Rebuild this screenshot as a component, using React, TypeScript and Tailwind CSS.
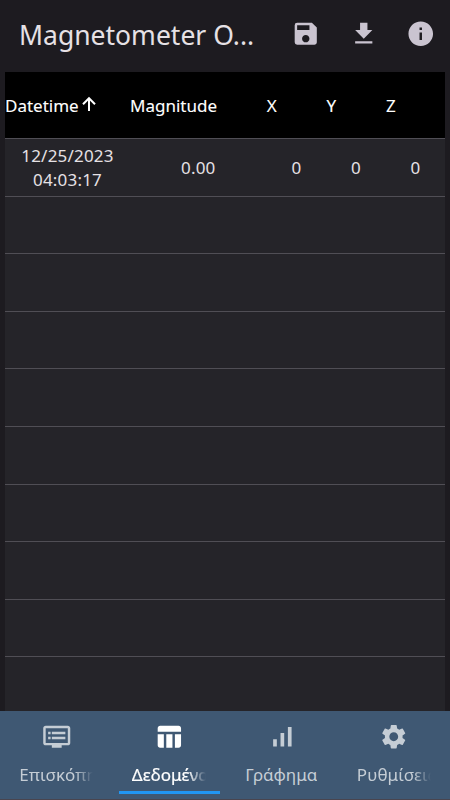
import clsx from "clsx";
import type { IconType } from "react-icons";
import {
  MdDvr,
  MdFileDownload,
  MdInfo,
  MdSave,
  MdSettings,
  MdSignalCellularAlt,
  MdTableChart,
} from "react-icons/md";

interface Reading {
  date: string;
  time: string;
  magnitude: string;
  x: number;
  y: number;
  z: number;
}

interface Tab {
  label: string;
  icon: IconType;
  active?: boolean;
  fade?: boolean;
}

const readings: Reading[] = [
  { date: "12/25/2023", time: "04:03:17", magnitude: "0.00", x: 0, y: 0, z: 0 },
];

const tabs: Tab[] = [
  { label: "Επισκόπηση", icon: MdDvr, fade: true },
  { label: "Δεδομένα", icon: MdTableChart, active: true, fade: true },
  { label: "Γράφημα", icon: MdSignalCellularAlt },
  { label: "Ρυθμίσεις", icon: MdSettings, fade: true },
];

const EMPTY_ROWS = 9;

function SortArrow() {
  return (
    <svg
      viewBox="0 0 20 20"
      className="mb-1 size-5 fill-none stroke-current stroke-2"
    >
      <path d="M10 17V4.5M4 10.2l6-6 6 6" />
    </svg>
  );
}

function TopBar() {
  return (
    <header className="flex h-[72px] shrink-0 items-center pl-[19px] pr-[14.5px] pb-[5px]">
      <h1 className="w-[240px] truncate pt-1 text-[26.5px] text-[#e6e1e5]">
        Magnetometer O...
      </h1>
      <div className="ml-auto flex gap-[28px] text-[#cac4d0]">
        <button aria-label="Save">
          <MdSave className="size-[29.5px]" />
        </button>
        <button aria-label="Download">
          <MdFileDownload className="size-[29.5px]" />
        </button>
        <button aria-label="Info">
          <MdInfo className="size-[29.5px]" />
        </button>
      </div>
    </header>
  );
}

function DataTable() {
  return (
    <main className="mx-[5px] min-h-0 flex-1 overflow-hidden bg-[#252429] text-[#e6e1e5]">
      <div className="flex h-[66px] items-center bg-black pt-0.5 text-[17px] text-white [-webkit-text-stroke:0.1px_white]">
        <div className="flex w-[125px] items-center">
          Datetime
          <SortArrow />
        </div>
        <div className="w-[112px]">Magnitude</div>
        <div className="w-[59.5px] text-center">X</div>
        <div className="w-[59.5px] text-center">Y</div>
        <div className="w-[59.5px] text-center">Z</div>
      </div>
      {readings.map((row) => (
        <div
          key={row.date + row.time}
          className="flex h-[57.6px] items-center border-t border-[#504e55] pt-0.5 text-[17px] leading-6 tracking-[0.2px]"
        >
          <div className="w-[125px] text-center">
            {row.date}
            <br />
            {row.time}
          </div>
          <div className="w-[85.5px] text-right">{row.magnitude}</div>
          <div className="w-[86px] text-right">{row.x}</div>
          <div className="w-[59.5px] text-right">{row.y}</div>
          <div className="w-[59.5px] text-right">{row.z}</div>
        </div>
      ))}
      {Array.from({ length: EMPTY_ROWS }, (_, i) => (
        <div key={i} className="h-[57.6px] border-t border-[#504e55]" />
      ))}
    </main>
  );
}

function TabBar() {
  return (
    <nav className="flex h-[89px] shrink-0 border-b border-[#49454f] bg-[#3f5873]">
      {tabs.map(({ label, icon: Icon, active, fade }) => (
        <button
          key={label}
          className={clsx(
            "relative flex w-1/4 flex-col items-center pt-[10.5px]",
            active ? "text-white" : "text-[#c5cdd5]"
          )}
        >
          <Icon className="size-[29.5px]" />
          <span
            className={clsx(
              "mt-[9.5px] overflow-hidden whitespace-nowrap text-[17px] leading-7",
              active && "[-webkit-text-stroke:0.2px_white]",
              fade &&
                "w-[74px] text-left tracking-[0.1px] [mask-image:linear-gradient(to_right,black_76%,transparent)]"
            )}
          >
            {label}
          </span>
          {active && (
            <span className="absolute bottom-[5px] left-[6px] h-[3px] w-[101px] bg-[#2196f3]" />
          )}
        </button>
      ))}
    </nav>
  );
}

export default function App() {
  return (
    <div className="flex h-screen flex-col overflow-hidden bg-[#1d1b20] font-['Noto_Sans',sans-serif]">
      <TopBar />
      <DataTable />
      <TabBar />
    </div>
  );
}
